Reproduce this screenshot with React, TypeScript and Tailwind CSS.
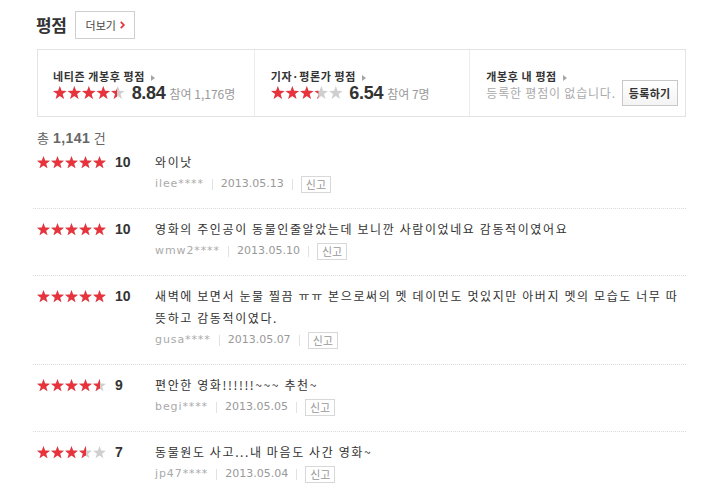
import React, { useId } from 'react';

const KR = "font-['Noto_Sans_CJK_KR',sans-serif]";
const NUM = "font-['Liberation_Sans','Noto_Sans_CJK_KR',sans-serif]";
const META = "font-['DejaVu_Sans','Noto_Sans_CJK_KR',sans-serif]";

const STAR =
  'M6.5 0 L8.12 4.58 L12.97 4.7 L9.12 7.65 L10.5 12.3 L6.5 9.55 L2.5 12.3 L3.88 7.65 L0.03 4.7 L4.88 4.58 Z';

// value = number of filled stars (0-5), fractions allowed
const Stars: React.FC<{ value: number; pitch?: number; scale?: number }> = ({
  value,
  pitch = 14,
  scale = 1,
}) => {
  const id = useId().replace(/:/g, '');
  const width = pitch * 4 + 13 * scale;
  const height = 13 * scale;
  const stars = [0, 1, 2, 3, 4];
  return (
    <svg width={width} height={height} viewBox={`0 0 ${width} ${height}`} className="block shrink-0">
      <defs>
        <clipPath id={`c${id}`}>
          <rect x="0" y="0" width={value * pitch} height={height} />
        </clipPath>
      </defs>
      {stars.map((i) => (
        <path key={`g${i}`} d={STAR} fill="#cfcfcf" transform={`translate(${i * pitch} 0) scale(${scale})`} />
      ))}
      <g clipPath={`url(#c${id})`}>
        {stars.map((i) => (
          <path key={`r${i}`} d={STAR} fill="#e8323c" transform={`translate(${i * pitch} 0) scale(${scale})`} />
        ))}
      </g>
    </svg>
  );
};

const Caret = () => (
  <svg width="4" height="6" viewBox="0 0 4 6" className="inline-block ml-[6px] mb-[1px]">
    <path d="M0 0 L4 3 L0 6 Z" fill="#a5a5a5" />
  </svg>
);

interface Review {
  score: number;
  text: React.ReactNode;
  user: string;
  date: string;
}

const reviews: Review[] = [
  { score: 10, text: '와이낫', user: 'ilee****', date: '2013.05.13' },
  {
    score: 10,
    text: '영화의 주인공이 동물인줄알았는데 보니깐 사람이었네요 감동적이였어요',
    user: 'wmw2****',
    date: '2013.05.10',
  },
  {
    score: 10,
    text: (
      <>
        새벽에 보면서 눈물 찔끔 ㅠㅠ 본으로써의 멧 데이먼도 멋있지만 아버지 멧의 모습도 너무 따
        <br />
        뜻하고 감동적이였다.
      </>
    ),
    user: 'gusa****',
    date: '2013.05.07',
  },
  { score: 9, text: '편안한 영화!!!!!!~~~ 추천~', user: 'begi****', date: '2013.05.05' },
  { score: 7, text: '동물원도 사고...내 마음도 사간 영화~', user: 'jp47****', date: '2013.05.04' },
];

const Bar = () => <span className="inline-block w-px h-[11px] bg-[#e2e2e2] mx-[8px]" />;

const ReviewRow: React.FC<{ r: Review; first: boolean }> = ({ r, first }) => (
  <li
    className={`flex pb-[13px] ${first ? 'pt-[4px]' : 'pt-[9px] border-t border-dotted border-[#dadada]'} -ml-[4px] pl-[4px]`}
  >
    <div className="w-[118px] shrink-0 flex items-center h-[22px]">
      <Stars value={r.score / 2} />
      <span className={`ml-[9px] text-[14px] font-bold text-[#333] ${NUM}`}>{r.score}</span>
    </div>
    <div className="flex-1 min-w-0">
      <p className={`text-[12px] leading-[22px] tracking-[1.6px] text-[#333] whitespace-nowrap ${KR}`}>{r.text}</p>
      <div className="flex items-center h-[22px]">
        <span className={`text-[11px] text-[#aaa] tracking-[0.9px] ${META}`}>{r.user}</span>
        <Bar />
        <span className={`text-[11px] text-[#999] ${META}`}>{r.date}</span>
        <Bar />
        <button
          className={`h-[17px] px-[4px] border border-[#d8d8d8] bg-white text-[11px] leading-[15px] text-[#999] ${KR}`}
        >
          신고
        </button>
      </div>
    </div>
  </li>
);

export default function App() {
  return (
    <div className="w-[720px] h-[498px] bg-white overflow-hidden pl-[37px] pr-[34px] pt-[11px]">
      {/* title */}
      <div className="flex items-center h-[28px]">
        <h2 className={`text-[17px] font-bold text-[#333] tracking-[-0.5px] -ml-[1px] ${KR}`}>평점</h2>
        <button
          className={`ml-[9px] h-[28px] w-[60px] border border-[#cfcfcf] bg-white flex items-center justify-center text-[11px] text-[#444] ${KR}`}
        >
          더보기
          <svg width="5" height="8" viewBox="0 0 5 8" className="ml-[4px]">
            <path d="M0.8 0.8 L3.8 4 L0.8 7.2" fill="none" stroke="#e8323c" strokeWidth="1.8" />
          </svg>
        </button>
      </div>

      {/* summary */}
      <div className="mt-[10px] grid grid-cols-3 border border-[#e3e3e3] h-[68px]">
        <div className="pl-[15px] pt-[19px]">
          <div className={`text-[11px] leading-[14px] font-bold text-[#333] tracking-[0.6px] ${KR}`}>
            네티즌 개봉후 평점<Caret />
          </div>
          <div className="flex items-center h-[20px]">
            <Stars value={4.42} pitch={14.5} scale={1.05} />
            <span className={`ml-[7px] text-[18px] font-bold text-[#333] tracking-[-0.3px] ${NUM}`}>8.84</span>
            <span className={`ml-[4px] text-[12px] text-[#999] mt-[2px] ${KR}`}>참여 1,176명</span>
          </div>
        </div>
        <div className="pl-[16px] pt-[19px] border-l border-[#ececec]">
          <div className={`text-[11px] leading-[14px] font-bold text-[#333] tracking-[0.6px] ${KR}`}>
            기자·평론가 평점<Caret />
          </div>
          <div className="flex items-center h-[20px]">
            <Stars value={3.27} pitch={14.5} scale={1.05} />
            <span className={`ml-[7px] text-[18px] font-bold text-[#333] tracking-[-0.3px] ${NUM}`}>6.54</span>
            <span className={`ml-[4px] text-[12px] text-[#999] mt-[2px] ${KR}`}>참여 7명</span>
          </div>
        </div>
        <div className="pl-[16px] pt-[19px] border-l border-[#ececec]">
          <div className={`text-[11px] leading-[14px] font-bold text-[#333] tracking-[0.6px] ${KR}`}>
            개봉후 내 평점<Caret />
          </div>
          <div className="flex items-center h-[20px]">
            <span className={`text-[12px] text-[#aaa] tracking-[0.8px] ${KR}`}>등록한 평점이 없습니다.</span>
            <button
              className={`ml-[6px] h-[26px] px-[6px] border border-[#c8c8c8] bg-gradient-to-b from-white to-[#f3f3f3] text-[11px] font-bold text-[#333] tracking-[0.3px] ${KR}`}
            >
              등록하기
            </button>
          </div>
        </div>
      </div>

      {/* total */}
      <div className={`mt-[12px] text-[13px] leading-[18px] text-[#666] tracking-[0.5px] ${KR}`}>
        총 <span className={`font-bold text-[14px] ${NUM}`}>1,141</span> 건
      </div>

      <ul>
        {reviews.map((r, i) => (
          <ReviewRow key={r.user} r={r} first={i === 0} />
        ))}
      </ul>
    </div>
  );
}
